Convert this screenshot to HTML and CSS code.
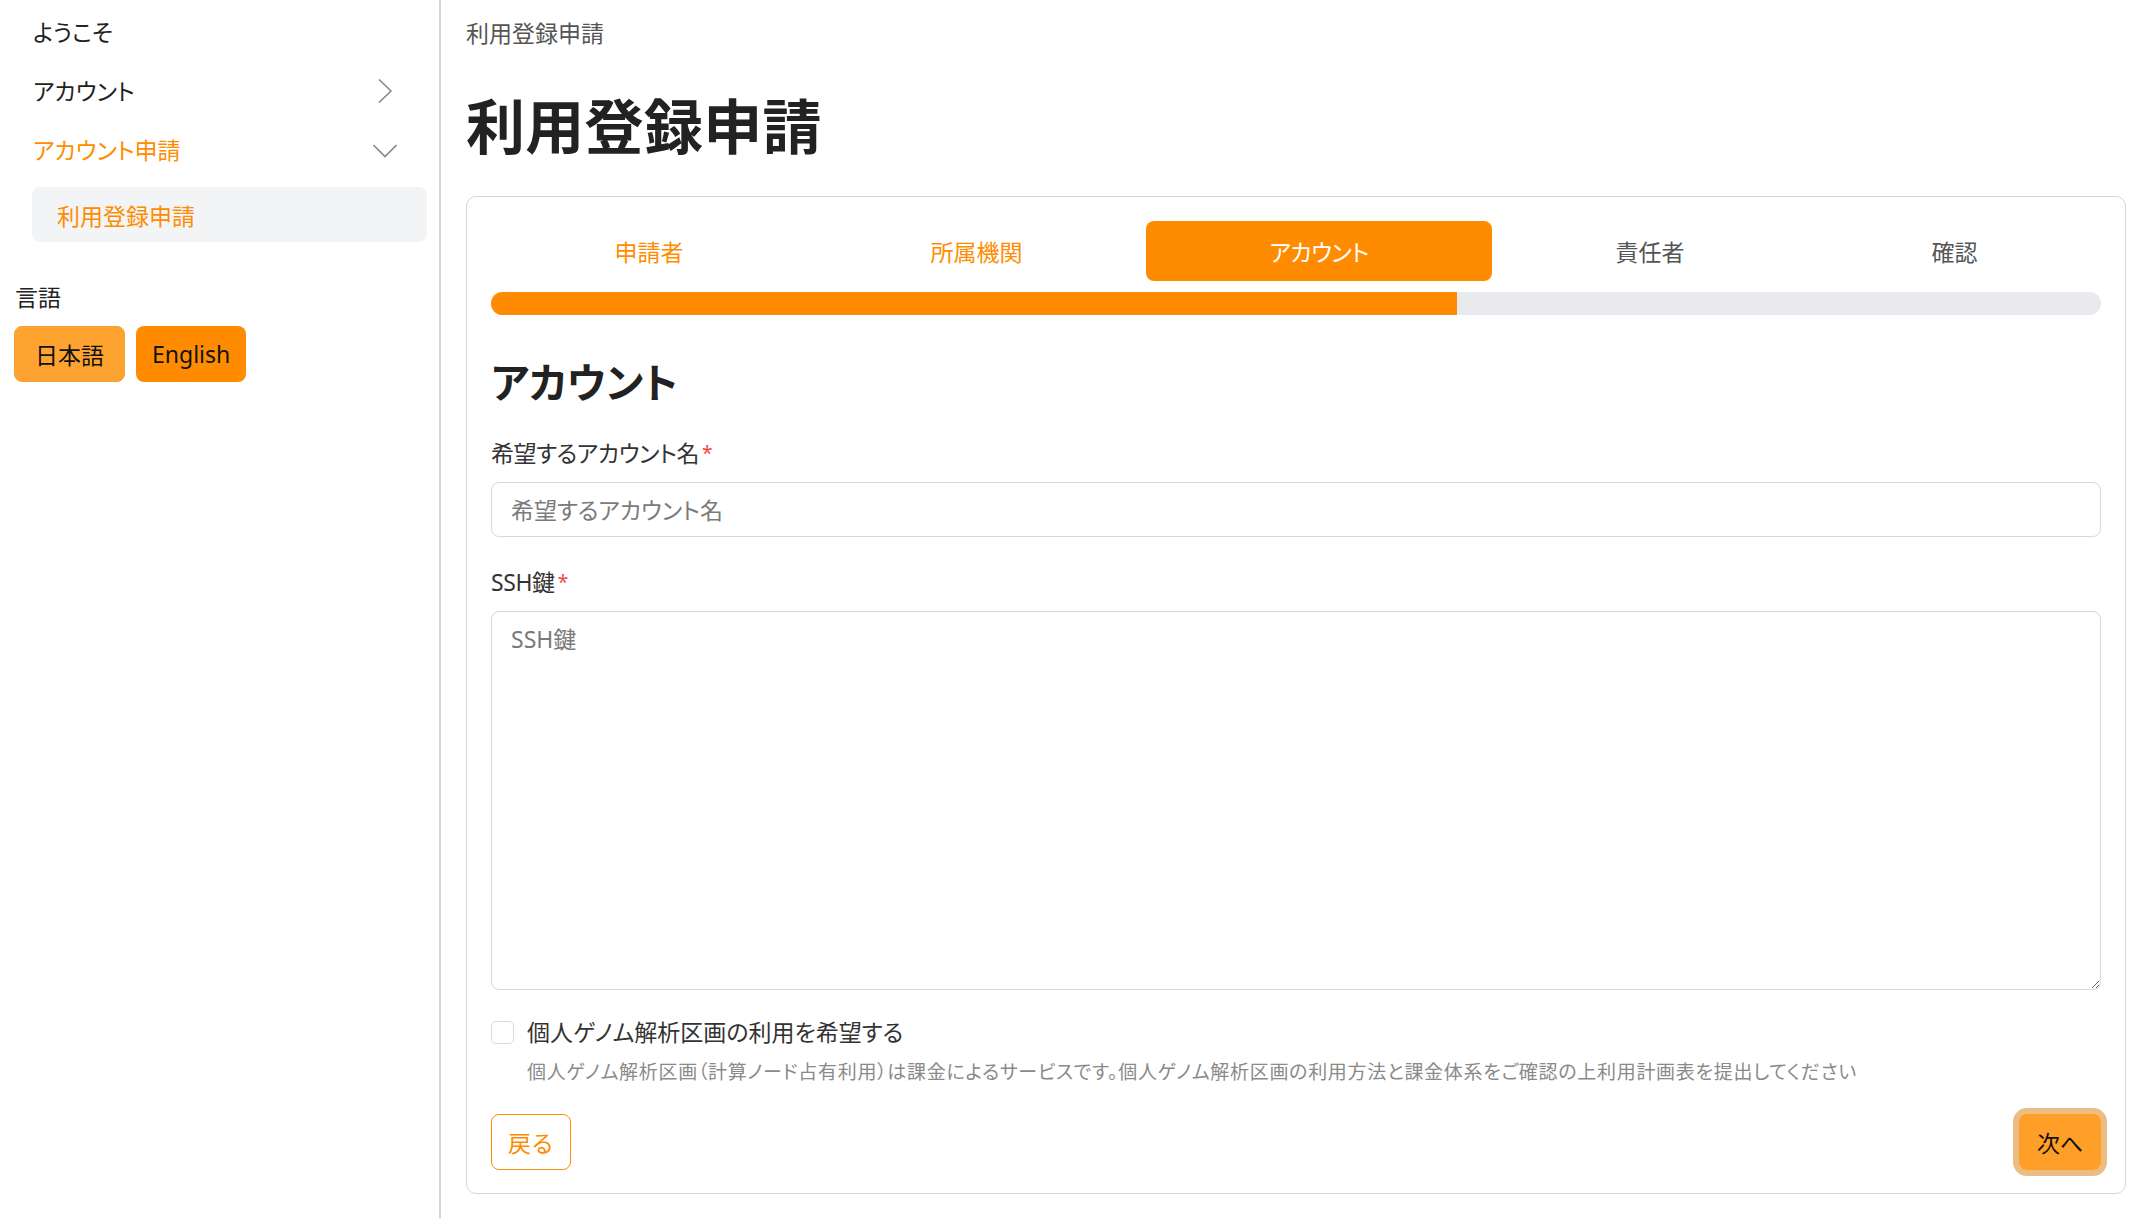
FILE: index.html
```html
<!DOCTYPE html>
<html lang="ja">
<head>
<meta charset="utf-8">
<title>利用登録申請</title>
<link rel="stylesheet" href="styles.css">
</head>
<body>
<div class="layout">
  <aside class="sidebar">
    <nav class="nav">
      <a class="nav-item">ようこそ</a>
      <a class="nav-item">アカウント
        <svg class="chev" viewBox="0 0 24 24" width="24" height="24"><polyline points="6,0.5 18,12 6,23.5" fill="none" stroke="#8a8a8a" stroke-width="1.6"/></svg>
      </a>
      <a class="nav-item nav-item--open">アカウント申請
        <svg class="chev" viewBox="0 0 24 24" width="24" height="24"><polyline points="0.5,7 12,18.5 23.5,7" fill="none" stroke="#8a8a8a" stroke-width="1.6"/></svg>
      </a>
      <a class="nav-sub">利用登録申請</a>
    </nav>
    <div class="lang">
      <div class="lang-label">言語</div>
      <div class="lang-buttons">
        <button class="lang-btn lang-btn--ja">日本語</button>
        <button class="lang-btn lang-btn--en">English</button>
      </div>
    </div>
  </aside>
  <main class="main">
    <div class="breadcrumb">利用登録申請</div>
    <h1 class="title">利用登録申請</h1>
    <section class="card">
      <div class="steps">
        <div class="step step--done">申請者</div>
        <div class="step step--done">所属機関</div>
        <div class="step step--active">アカウント</div>
        <div class="step">責任者</div>
        <div class="step">確認</div>
      </div>
      <div class="progress"><div class="progress-fill" style="width:60%"></div></div>
      <h2 class="section-title">アカウント</h2>
      <label class="field-label">希望するアカウント名<span class="req">*</span></label>
      <input class="input" type="text" placeholder="希望するアカウント名">
      <label class="field-label field-label--ssh">SSH鍵<span class="req">*</span></label>
      <textarea class="textarea" placeholder="SSH鍵"></textarea>
      <label class="check-row"><span class="checkbox"></span><span class="check-text">個人ゲノム解析区画の利用を希望する</span></label>
      <p class="help">個人ゲノム解析区画（計算ノード占有利用）は課金によるサービスです。個人ゲノム解析区画の利用方法と課金体系をご確認の上利用計画表を提出してください</p>
      <div class="actions">
        <button class="btn-back">戻る</button>
        <button class="btn-next">次へ</button>
      </div>
    </section>
  </main>
</div>
</body>
</html>
```

FILE: styles.css
```css
* { box-sizing: border-box; }
html, body { margin: 0; padding: 0; }
body {
  font-family: "Noto Sans", "Noto Sans CJK JP", sans-serif;
  font-feature-settings: "palt" 1;
  font-size: 23px;
  color: #222;
  background: #fff;
}
.layout {
  display: flex;
  min-height: 100vh;
}
.sidebar {
  width: 441px;
  flex: 0 0 441px;
  border-right: 2px solid #d4d7dc;
}
.nav {
  display: flex;
  flex-direction: column;
  padding: 2px 12px 0 32px;
}
.nav-item {
  display: flex;
  align-items: center;
  justify-content: space-between;
  height: 59px;
  padding: 0 30px 0 1px;
  line-height: 30px;
  color: #222;
}
.nav-item--open { color: #ff8c00; }
.chev { display: block; }
.nav-sub {
  display: flex;
  align-items: center;
  height: 55px;
  margin-top: 8px;
  padding-left: 25px;
  background: #f3f4f6;
  border-radius: 8px;
  color: #ff8c00;
}
.lang {
  padding: 40px 0 0 14px;
}
.lang-label {
  line-height: 30px;
  padding-left: 1px;
}
.lang-buttons {
  display: flex;
  gap: 11px;
  margin-top: 14px;
}
.lang-btn {
  height: 56px;
  border: none;
  border-radius: 8px;
  font-family: inherit;
  font-size: 23px;
  color: #111;
  cursor: pointer;
}
.lang-btn--ja {
  padding: 0 20px;
  background: #ffa330;
  border: 1px solid #f7a032;
}
.lang-btn--en {
  padding: 0 16px;
  background: #ff8c00;
}
.main {
  flex: 1;
  min-width: 0;
  padding: 18px 23px 24px 25px;
}
.breadcrumb {
  line-height: 30px;
  color: #555;
}
.title {
  margin: 43px 0 0;
  font-size: 59px;
  line-height: 70px;
  font-weight: 700;
  color: #222;
  letter-spacing: 0.3px;
}
.card {
  display: flex;
  flex-direction: column;
  margin-top: 35px;
  padding: 24px 24px 23px;
  border: 1px solid #d5d5d5;
  border-radius: 10px;
}
.steps {
  display: flex;
  height: 60px;
}
.step {
  flex: 1 1 auto;
  display: flex;
  align-items: center;
  justify-content: center;
  border-radius: 8px;
  color: #555;
}
.step--done { color: #ff8c00; }
.step--active {
  background: #ff8c00;
  color: #fff;
  letter-spacing: -0.5px;
}
.progress {
  margin-top: 11px;
  height: 23px;
  border-radius: 12px;
  background: #e9eaee;
  overflow: hidden;
}
.progress-fill {
  height: 100%;
  background: #ff8c00;
}
.section-title {
  margin: 42px 0 0;
  font-size: 41px;
  line-height: 50px;
  font-weight: 700;
  color: #222;
}
.field-label {
  display: block;
  margin-top: 31px;
  line-height: 30px;
  color: #333;
  letter-spacing: -0.4px;
}
.field-label--ssh { margin-top: 30px; }
.req {
  color: #ef4444;
  font-size: 19px;
  margin-left: 3px;
  vertical-align: 2px;
}
.input, .textarea {
  display: block;
  width: 100%;
  margin-top: 14px;
  border: 1px solid #d9d9d9;
  border-radius: 8px;
  font-family: inherit;
  font-feature-settings: "palt" 1;
  font-size: 23px;
  color: #222;
  background: #fff;
  outline: none;
}
.input {
  height: 55px;
  padding: 0 19px;
}
.textarea {
  height: 379px;
  padding: 12px 19px;
  line-height: 30px;
  resize: vertical;
}
.input::placeholder, .textarea::placeholder { color: #7a7a7a; }
.check-row {
  display: flex;
  align-items: center;
  gap: 13px;
  margin-top: 27px;
  height: 30px;
}
.checkbox {
  width: 23px;
  height: 23px;
  border: 1px solid #dcdcdc;
  border-radius: 5px;
  background: #fff;
}
.check-text {
  color: #333;
  line-height: 30px;
}
.help {
  margin: 11px 0 0 36px;
  font-size: 19px;
  line-height: 28px;
  color: #8a8a8a;
  letter-spacing: 0.7px;
}
.actions {
  display: flex;
  justify-content: space-between;
  align-items: center;
  margin-top: 28px;
}
.btn-back {
  height: 56px;
  padding: 0 16px;
  border: 1px solid #ff8c00;
  border-radius: 8px;
  background: #fff;
  color: #ff8c00;
  font-family: inherit;
  font-size: 23px;
  cursor: pointer;
}
.btn-next {
  height: 56px;
  padding: 0 18px;
  border: none;
  border-radius: 8px;
  background: #ff9f28;
  color: #111;
  font-family: inherit;
  font-size: 23px;
  box-shadow: 0 0 0 6px #ecbd83;
  cursor: pointer;
}
```
